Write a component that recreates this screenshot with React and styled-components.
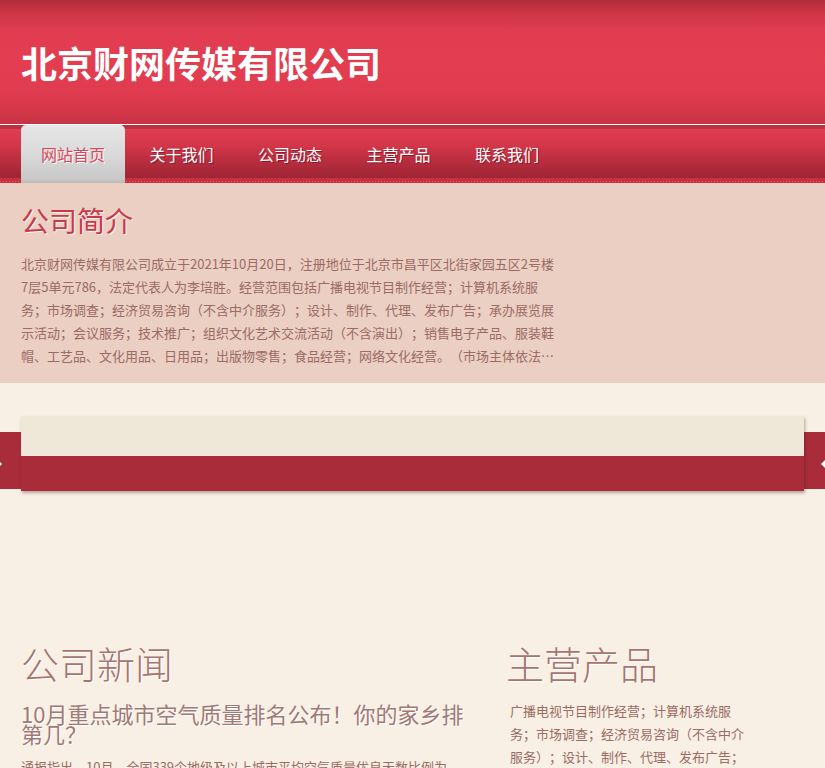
import React from "react";
import styled, { createGlobalStyle } from "styled-components";

const GlobalStyle = createGlobalStyle`
  html, body { margin: 0; padding: 0; }
  body {
    background: #f8f0e5;
    font-family: "Noto Sans CJK SC", "Noto Sans", sans-serif;
    text-spacing-trim: space-all;
  }
  * { box-sizing: border-box; }
`;

const Header = styled.header`
  height: 124px;
  display: flex;
  align-items: center;
  padding-left: 21px;
  background: linear-gradient(
    to bottom,
    #b02c3b 0px,
    #cf3647 14px,
    #e03c4f 30px,
    #e33d50 60px,
    #e03c4f 92px,
    #d63849 110px,
    #c43344 124px
  );
`;

const SiteTitle = styled.h1`
  margin: 0;
  color: #fff;
  font-size: 36px;
  font-weight: 700;
  letter-spacing: 0;
  line-height: 1;
`;

const Nav = styled.nav`
  height: 59px;
  border-top: 1px solid #ffffff;
  display: flex;
  align-items: stretch;
  gap: 4.5px;
  padding-left: 21px;
  background:
    linear-gradient(to right, #e06070 1px, transparent 1px) 0 56px / 3px 1px repeat-x,
    linear-gradient(
      to bottom,
      #b8323f 0px,
      #b8323f 4px,
      #e33d50 4px,
      #d43649 20px,
      #b22b3c 40px,
      #9e2434 53px,
      #c9303f 53px,
      #c9303f 58px
    );
`;

const NavItem = styled.a`
  display: flex;
  align-items: center;
  padding: 0 20px;
  font-size: 16px;
  text-decoration: none;
  cursor: pointer;
  color: ${(p) => (p.$active ? "#d8485b" : "#ffffff")};
  text-shadow: ${(p) =>
    p.$active ? "1px 1px 0 rgba(255,255,255,0.9)" : "1px 1px 0 rgba(80,0,10,0.45)"};
  border-radius: ${(p) => (p.$active ? "5px 5px 0 0" : "0")};
  background: ${(p) =>
    p.$active
      ? "linear-gradient(to bottom, #e6e6e6 0%, #dadada 50%, #c9c9c9 92%, #b9b9b9 100%)"
      : "transparent"};
`;

const Intro = styled.section`
  background: #eacfc2;
  padding: 19px 21px 16px;
`;

const IntroTitle = styled.h2`
  margin: 0;
  font-size: 28px;
  font-weight: 400;
  line-height: 36px;
  color: #c63a4c;
  text-shadow: 1px 1px 0 rgba(255, 255, 255, 0.8);
`;

const IntroText = styled.p`
  margin: 14px 0 0;
  width: 540px;
  font-size: 13px;
  line-height: 23px;
  color: #9b6b64;
  display: -webkit-box;
  -webkit-line-clamp: 5;
  -webkit-box-orient: vertical;
  overflow: hidden;
`;

const SliderStage = styled.div`
  position: relative;
  margin-top: 33px;
  height: 75px;
  padding: 0 21px;
  background: linear-gradient(
    to bottom,
    transparent 0px,
    transparent 16px,
    #a92c3a 16px,
    #a92c3a 73px,
    transparent 73px
  );
`;

const SlideBox = styled.div`
  height: 75px;
  display: grid;
  grid-template-rows: 40px 35px;
  box-shadow: 1px 2px 3px rgba(60, 20, 20, 0.35);
`;

const SlideTop = styled.div`
  background: #efe7d8;
`;

const SlideBottom = styled.div`
  background: #a92c3a;
`;

const Arrow = styled.span`
  position: absolute;
  top: 37px;
  ${(p) => (p.$side === "left" ? "left: -10px;" : "right: -8px;")}
  width: 12px;
  height: 16px;
  display: block;
`;

const Columns = styled.div`
  margin-top: 149px;
  padding: 0 21px;
  display: grid;
  grid-template-columns: 455px 1fr;
  column-gap: 30px;
`;

const Column = styled.section``;

const SectionTitle = styled.h2`
  margin: 0;
  font-size: 38px;
  font-weight: 300;
  line-height: 46px;
  color: #a47571;
  text-shadow: 1px 1px 0 #ffffff;
`;

const NewsTitle = styled.h3`
  margin: 17px 0 0;
  font-size: 22px;
  font-weight: 400;
  line-height: 20px;
  color: #a07a77;
  text-shadow: 1px 1px 0 #ffffff;
`;

const NewsText = styled.p`
  margin: 12px 0 0;
  font-size: 13px;
  line-height: 23px;
  color: #9b6b64;
`;

const ProductText = styled.p`
  margin: 13px 0 0 4px;
  width: 240px;
  font-size: 13px;
  line-height: 23px;
  color: #9b6b64;
`;

const navItems = ["网站首页", "关于我们", "公司动态", "主营产品", "联系我们"];

export default function App() {
  return (
    <>
      <GlobalStyle />
      <Header>
        <SiteTitle>北京财网传媒有限公司</SiteTitle>
      </Header>
      <Nav>
        {navItems.map((t, i) => (
          <NavItem key={t} $active={i === 0}>
            {t}
          </NavItem>
        ))}
      </Nav>
      <Intro>
        <IntroTitle>公司简介</IntroTitle>
        <IntroText>
          北京财网传媒有限公司成立于2021年10月20日，注册地位于北京市昌平区北街家园五区2号楼7层5单元786，法定代表人为李培胜。经营范围包括广播电视节目制作经营；计算机系统服务；市场调查；经济贸易咨询（不含中介服务）；设计、制作、代理、发布广告；承办展览展示活动；会议服务；技术推广；组织文化艺术交流活动（不含演出）；销售电子产品、服装鞋帽、工艺品、文化用品、日用品；出版物零售；食品经营；网络文化经营。（市场主体依法自主选择经营项目，开展经营活动；依法须经批准的项目，经相关部门批准后依批准的内容开展经营活动。）
        </IntroText>
      </Intro>
      <SliderStage>
        <SlideBox>
          <SlideTop />
          <SlideBottom />
        </SlideBox>
        <Arrow $side="left">
          <svg width="12" height="16" viewBox="0 0 12 16">
            <path d="M4 2 L10 8 L4 14" fill="none" stroke="#ffffff" strokeWidth="3" />
          </svg>
        </Arrow>
        <Arrow $side="right">
          <svg width="12" height="16" viewBox="0 0 12 16">
            <path d="M8 2 L2 8 L8 14" fill="none" stroke="#ffffff" strokeWidth="3" />
          </svg>
        </Arrow>
      </SliderStage>
      <Columns>
        <Column>
          <SectionTitle>公司新闻</SectionTitle>
          <NewsTitle>10月重点城市空气质量排名公布！你的家乡排第几？</NewsTitle>
          <NewsText>
            通报指出，10月，全国339个地级及以上城市平均空气质量优良天数比例为87.0%，同比上升1.4个百分点。
          </NewsText>
        </Column>
        <Column>
          <SectionTitle>主营产品</SectionTitle>
          <ProductText>
            广播电视节目制作经营；计算机系统服务；市场调查；经济贸易咨询（不含中介服务）；设计、制作、代理、发布广告；承办展览展示活动；会议服务。
          </ProductText>
        </Column>
      </Columns>
    </>
  );
}
